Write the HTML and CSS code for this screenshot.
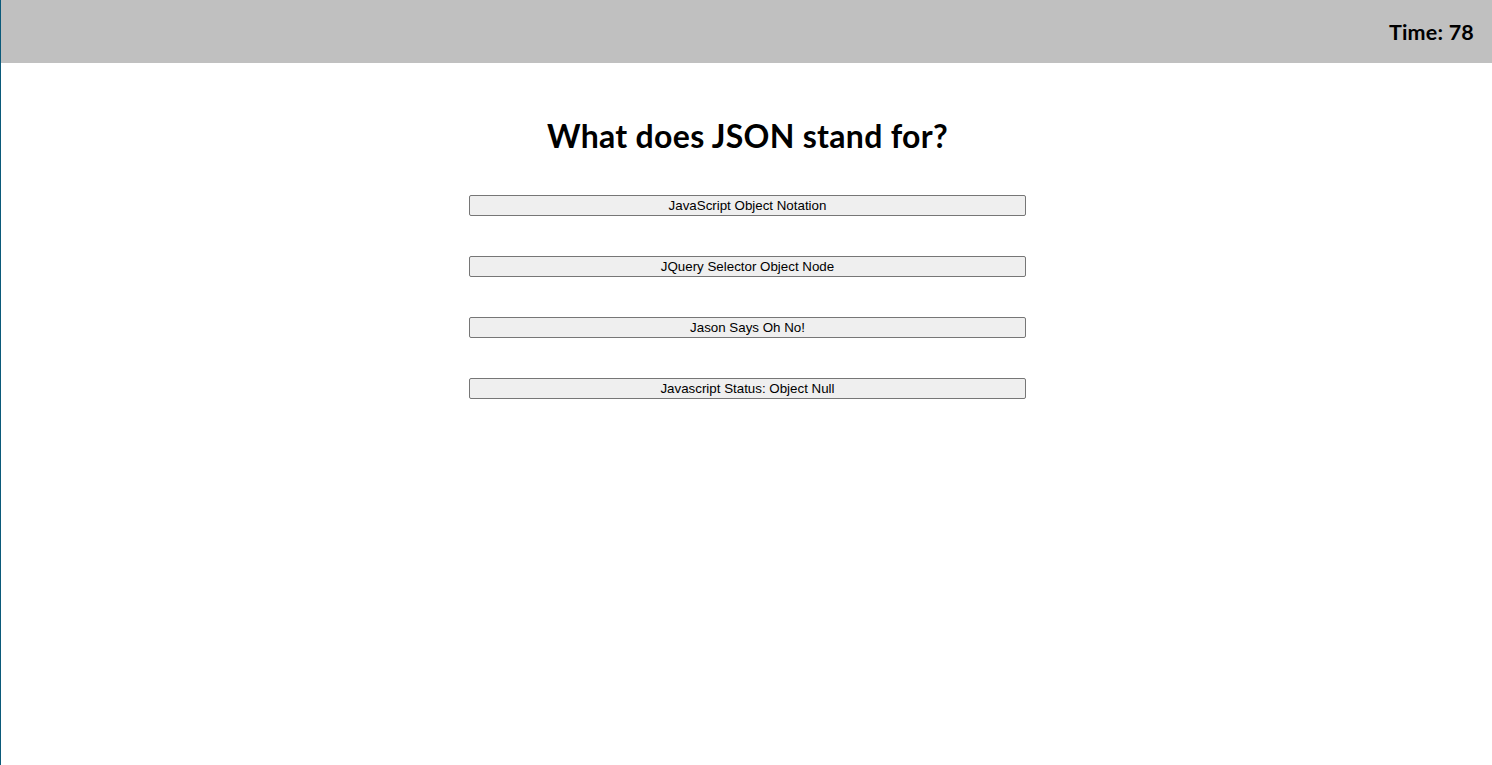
FILE: index.html
```html
<!DOCTYPE html>
<html>
<head>
<meta charset="utf-8">
<title>Quiz</title>
<link rel="stylesheet" href="styles.css">
</head>
<body>
<div class="page">
  <header class="topbar">
    <span class="timer">Time: 78</span>
  </header>
  <main class="quiz">
    <h1 class="question">What does JSON stand for?</h1>
    <div class="answers">
      <button class="answer">JavaScript Object Notation</button>
      <button class="answer">JQuery Selector Object Node</button>
      <button class="answer">Jason Says Oh No!</button>
      <button class="answer">Javascript Status: Object Null</button>
    </div>
  </main>
</div>
</body>
</html>
```
FILE: styles.css
```css
html, body {
  margin: 0;
  padding: 0;
  height: 100%;
  background: #ffffff;
}
.page {
  min-height: 100%;
  border-left: 1px solid #0b5a7a;
  box-sizing: border-box;
}
.topbar {
  height: 63px;
  background: #c0c0c0;
  display: flex;
  align-items: center;
  justify-content: flex-end;
  padding-right: 18px;
}
.timer {
  font-family: "Lato", "Open Sans", sans-serif;
  font-weight: bold;
  font-size: 21.5px;
  color: #000;
  margin-top: 1px;
  letter-spacing: 0.2px;
}
.quiz {
  display: flex;
  flex-direction: column;
  align-items: center;
  padding-left: 2px;
}
.question {
  font-family: "Lato", "Open Sans", sans-serif;
  font-weight: bold;
  font-size: 32px;
  letter-spacing: 0.3px;
  margin: 55px 0 0 0;
  line-height: 36px;
  color: #000;
}
.answers {
  display: flex;
  flex-direction: column;
  gap: 40px;
  margin-top: 41px;
}
.answer {
  width: 557px;
  height: 21px;
  padding: 0;
  background: #efefef;
  border: 1px solid #767676;
  border-radius: 2px;
  font-family: "Liberation Sans", Arial, sans-serif;
  font-size: 13.333px;
  color: #000;
}
```
